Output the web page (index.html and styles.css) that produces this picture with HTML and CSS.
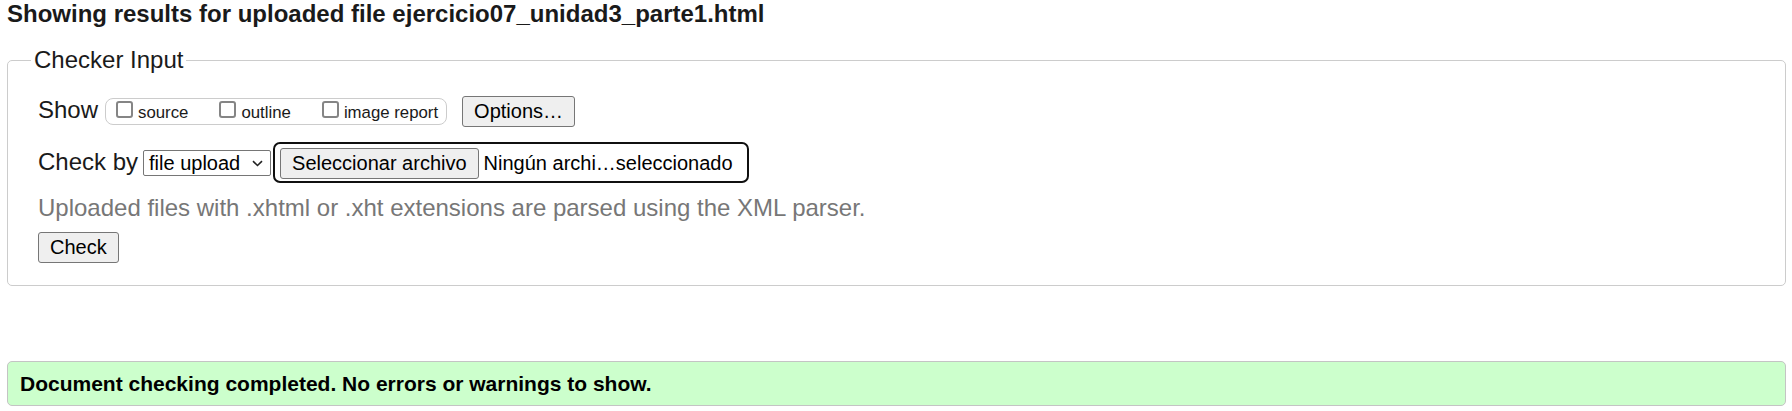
FILE: index.html
```html
<!DOCTYPE html>
<html lang="en">
<head>
<meta charset="utf-8">
<title>Nu Html Checker</title>
<link rel="stylesheet" href="styles.css">
</head>
<body>
<h2 class="title">Showing results for uploaded file ejercicio07_unidad3_parte1.html</h2>
<form class="checker">
  <fieldset class="input-box">
    <legend class="input-legend">Checker Input</legend>
    <div class="row row-show">
      <span class="row-label">Show</span>
      <span class="show-group">
        <label class="opt"><input type="checkbox" class="cb">source</label>
        <label class="opt"><input type="checkbox" class="cb">outline</label>
        <label class="opt"><input type="checkbox" class="cb">image report</label>
      </span>
      <button class="btn btn-options" type="button">Options…</button>
    </div>
    <div class="row row-check">
      <span class="row-label">Check by</span>
      <span class="select"><span class="select-text">file upload</span><svg class="chev" width="11" height="7" viewBox="0 0 11 7"><path d="M1 1.2 L5.5 5.5 L10 1.2" fill="none" stroke="#222" stroke-width="1.6"/></svg></span>
      <span class="file-wrap"><span class="btn btn-file">Seleccionar archivo</span><span class="file-name">Ningún archi…seleccionado</span></span>
    </div>
    <p class="hint">Uploaded files with .xhtml or .xht extensions are parsed using the XML parser.</p>
    <button class="btn btn-check" type="button">Check</button>
  </fieldset>
</form>
<div class="result">Document checking completed. No errors or warnings to show.</div>
</body>
</html>
```

FILE: styles.css
```css
html, body {
  background: #fff;
}
body {
  margin: 0;
  padding: 0 6px 0 7px;
  font-family: "Liberation Sans", Arial, sans-serif;
  font-size: 24px;
  color: #1a1a1a;
}
.title {
  margin: 0;
  font-size: 24px;
  line-height: 28px;
  font-weight: bold;
  color: #1a1a1a;
}
.checker {
  margin: 18px 0 0 0;
}
.input-box {
  margin: 0;
  padding: 22px 10px 22px 30px;
  border: 1px solid #cccccc;
  border-radius: 5px;
  min-width: 0;
}
.input-legend {
  padding: 0 3px;
  margin-left: -7px;
  font-size: 24px;
  line-height: 28px;
}
.row {
  display: flex;
  align-items: baseline;
  white-space: nowrap;
}
.row-label {
  font-size: 24px;
  line-height: 28px;
}
.show-group {
  display: inline-flex;
  align-items: baseline;
  margin-left: 7px;
  padding: 2px 8px 2px 10px;
  border: 1px solid #cccccc;
  border-radius: 8px;
  font-size: 16.8px;
  line-height: 19px;
  gap: 31px;
}
.opt {
  display: inline-flex;
  align-items: baseline;
}
.cb {
  appearance: none;
  -webkit-appearance: none;
  width: 17px;
  height: 17px;
  margin: 0 5px 0 0;
  border: 2px solid #858585;
  border-radius: 3px;
  background: #fff;
  box-sizing: border-box;
}
.btn {
  font-family: "Liberation Sans", Arial, sans-serif;
  font-size: 20px;
  line-height: 23px;
  color: #000;
  background: #efefef;
  border: 1px solid #767676;
  border-radius: 3px;
  padding: 3px 11px;
  margin: 0;
  display: inline-block;
  box-sizing: border-box;
  white-space: nowrap;
}
.btn-options {
  margin-left: 15px;
}
.row-check {
  margin-top: 15px;
}
.select {
  display: inline-flex;
  align-items: center;
  flex: none;
  box-sizing: border-box;
  width: 128px;
  margin-left: 5px;
  padding: 0 7px 0 5px;
  border: 1px solid #767676;
  border-radius: 2px;
  font-size: 20px;
  line-height: 24px;
  color: #000;
  background: #fff;
  white-space: nowrap;
}
.select-text {
  flex: none;
}
.chev {
  margin-left: auto;
  flex: none;
}
.file-wrap {
  display: inline-flex;
  align-items: baseline;
  flex: none;
  margin-left: 2px;
  padding: 4px 14px 2px 5px;
  border: 2px solid #101010;
  border-radius: 7px;
}
.file-name {
  margin-left: 5px;
  font-size: 20px;
  line-height: 23px;
  color: #000;
}
.hint {
  margin: 11px 0 0 0;
  font-size: 24px;
  line-height: 28px;
  color: #777777;
}
.btn-check {
  margin-top: 10px;
}
.result {
  margin-top: 75px;
  padding: 9px 12px;
  border: 1px solid #c4c4c4;
  border-radius: 5px;
  background: #ccffcc;
  font-size: 21px;
  line-height: 25px;
  font-weight: bold;
  color: #000;
}
```
